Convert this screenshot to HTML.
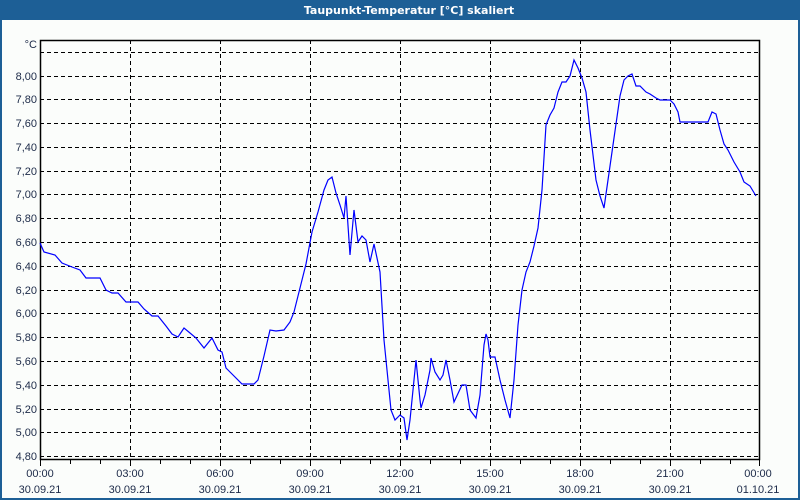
<!DOCTYPE html>
<html><head><meta charset="utf-8"><style>
html,body{margin:0;padding:0;width:800px;height:500px;overflow:hidden;background:#fbfdfb}
</style></head><body>
<svg width="800" height="500" xmlns="http://www.w3.org/2000/svg" style="display:block;font-family:'Liberation Sans',sans-serif">
<rect x="0" y="0" width="800" height="500" fill="#fbfdfb"/>
<rect x="0" y="0" width="800" height="20" fill="#1d5f96"/>
<rect x="0" y="0" width="2" height="500" fill="#1d5f96"/>
<rect x="798" y="0" width="2" height="500" fill="#1d5f96"/>
<rect x="0" y="498" width="800" height="2" fill="#1d5f96"/>
<text x="409" y="14" fill="#fff" font-size="11" font-weight="bold" text-anchor="middle" font-family="'DejaVu Sans',sans-serif">Taupunkt-Temperatur [°C] skaliert</text>
<g stroke="#000" stroke-dasharray="4,3" stroke-width="1">
<line x1="40" x2="760" y1="52.5" y2="52.5"/><line x1="40" x2="760" y1="76.5" y2="76.5"/><line x1="40" x2="760" y1="99.5" y2="99.5"/><line x1="40" x2="760" y1="123.5" y2="123.5"/><line x1="40" x2="760" y1="147.5" y2="147.5"/><line x1="40" x2="760" y1="171.5" y2="171.5"/><line x1="40" x2="760" y1="194.5" y2="194.5"/><line x1="40" x2="760" y1="218.5" y2="218.5"/><line x1="40" x2="760" y1="242.5" y2="242.5"/><line x1="40" x2="760" y1="266.5" y2="266.5"/><line x1="40" x2="760" y1="290.5" y2="290.5"/><line x1="40" x2="760" y1="313.5" y2="313.5"/><line x1="40" x2="760" y1="337.5" y2="337.5"/><line x1="40" x2="760" y1="361.5" y2="361.5"/><line x1="40" x2="760" y1="385.5" y2="385.5"/><line x1="40" x2="760" y1="409.5" y2="409.5"/><line x1="40" x2="760" y1="432.5" y2="432.5"/><line x1="40" x2="760" y1="456.5" y2="456.5"/>
<line x1="130.5" x2="130.5" y1="40" y2="460"/><line x1="220.5" x2="220.5" y1="40" y2="460"/><line x1="310.5" x2="310.5" y1="40" y2="460"/><line x1="400.5" x2="400.5" y1="40" y2="460"/><line x1="490.5" x2="490.5" y1="40" y2="460"/><line x1="580.5" x2="580.5" y1="40" y2="460"/><line x1="670.5" x2="670.5" y1="40" y2="460"/>
</g>
<rect x="40.5" y="40.5" width="719" height="419" fill="none" stroke="#000" stroke-width="1.5"/>
<g stroke="#000" stroke-width="1">
<line x1="40.5" x2="40.5" y1="460" y2="466"/><line x1="70.5" x2="70.5" y1="460" y2="464"/><line x1="100.5" x2="100.5" y1="460" y2="464"/><line x1="130.5" x2="130.5" y1="460" y2="466"/><line x1="160.5" x2="160.5" y1="460" y2="464"/><line x1="190.5" x2="190.5" y1="460" y2="464"/><line x1="220.5" x2="220.5" y1="460" y2="466"/><line x1="250.5" x2="250.5" y1="460" y2="464"/><line x1="280.5" x2="280.5" y1="460" y2="464"/><line x1="310.5" x2="310.5" y1="460" y2="466"/><line x1="340.5" x2="340.5" y1="460" y2="464"/><line x1="370.5" x2="370.5" y1="460" y2="464"/><line x1="400.5" x2="400.5" y1="460" y2="466"/><line x1="430.5" x2="430.5" y1="460" y2="464"/><line x1="460.5" x2="460.5" y1="460" y2="464"/><line x1="490.5" x2="490.5" y1="460" y2="466"/><line x1="520.5" x2="520.5" y1="460" y2="464"/><line x1="550.5" x2="550.5" y1="460" y2="464"/><line x1="580.5" x2="580.5" y1="460" y2="466"/><line x1="610.5" x2="610.5" y1="460" y2="464"/><line x1="640.5" x2="640.5" y1="460" y2="464"/><line x1="670.5" x2="670.5" y1="460" y2="466"/><line x1="700.5" x2="700.5" y1="460" y2="464"/><line x1="730.5" x2="730.5" y1="460" y2="464"/><line x1="759.5" x2="759.5" y1="460" y2="466"/>
</g>
<g fill="#1c2a48" font-size="11" text-anchor="end">
<text x="37" y="48">°C</text>
<text x="37" y="80">8,00</text><text x="37" y="103">7,80</text><text x="37" y="127">7,60</text><text x="37" y="151">7,40</text><text x="37" y="175">7,20</text><text x="37" y="198">7,00</text><text x="37" y="222">6,80</text><text x="37" y="246">6,60</text><text x="37" y="270">6,40</text><text x="37" y="294">6,20</text><text x="37" y="317">6,00</text><text x="37" y="341">5,80</text><text x="37" y="365">5,60</text><text x="37" y="389">5,40</text><text x="37" y="413">5,20</text><text x="37" y="436">5,00</text><text x="37" y="460">4,80</text>
</g>
<g fill="#1c2a48" font-size="11" text-anchor="middle">
<text x="40" y="477">00:00</text><text x="40" y="493">30.09.21</text>
<text x="130" y="477">03:00</text><text x="130" y="493">30.09.21</text>
<text x="220" y="477">06:00</text><text x="220" y="493">30.09.21</text>
<text x="310" y="477">09:00</text><text x="310" y="493">30.09.21</text>
<text x="400" y="477">12:00</text><text x="400" y="493">30.09.21</text>
<text x="490" y="477">15:00</text><text x="490" y="493">30.09.21</text>
<text x="580" y="477">18:00</text><text x="580" y="493">30.09.21</text>
<text x="670" y="477">21:00</text><text x="670" y="493">30.09.21</text>
<text x="758" y="477">00:00</text><text x="758" y="493">01.10.21</text>
</g>
<polyline fill="none" stroke="#0000ff" stroke-width="1.2" points="40,243 44,252 55,255 62,263 72,267 80,270 86,278 100,278 106,290 112,293 118,293 126,302 138,302 144,309 152,316 158,316 166,326 172,334 178,337 184,328 190,333 196,338 204,348 212,338 218,350 222,352 226,368 234,376 242,384 254,384 258,380 264,356 270,330 276,331 284,330 290,322 294,312 300,288 306,264 312,232 318,212 324,190 328,180 332,177 336,193 340,205 344,218 346,196 350,255 354,210 358,242 362,236 366,240 370,262 374,244 380,272 384,340 388,380 391,410 395,420 400,415 404,418 407,440 410,420 415,370 416,360 420,400 421,408 425,395 430,370 431,358 435,372 440,380 443,375 446,360 450,380 454,402 462,385 466,385 470,410 476,418 480,395 484,345 486,334 488,340 490,357 495,357 500,380 505,400 510,418 514,380 518,325 522,290 526,272 530,262 534,246 538,228 542,190 546,125 550,115 554,108 558,92 562,82 566,82 570,76 574,60 578,68 582,78 586,92 590,130 596,180 600,196 604,208 608,180 614,138 620,96 624,80 628,76 632,74 636,86 640,86 646,92 650,94 656,98 660,100 670,100 674,104 678,112 680,122 688,122 700,122 708,122 712,112 716,114 720,130 724,144 728,150 734,162 740,172 744,182 750,186 756,196"/>
</svg>
</body></html>
